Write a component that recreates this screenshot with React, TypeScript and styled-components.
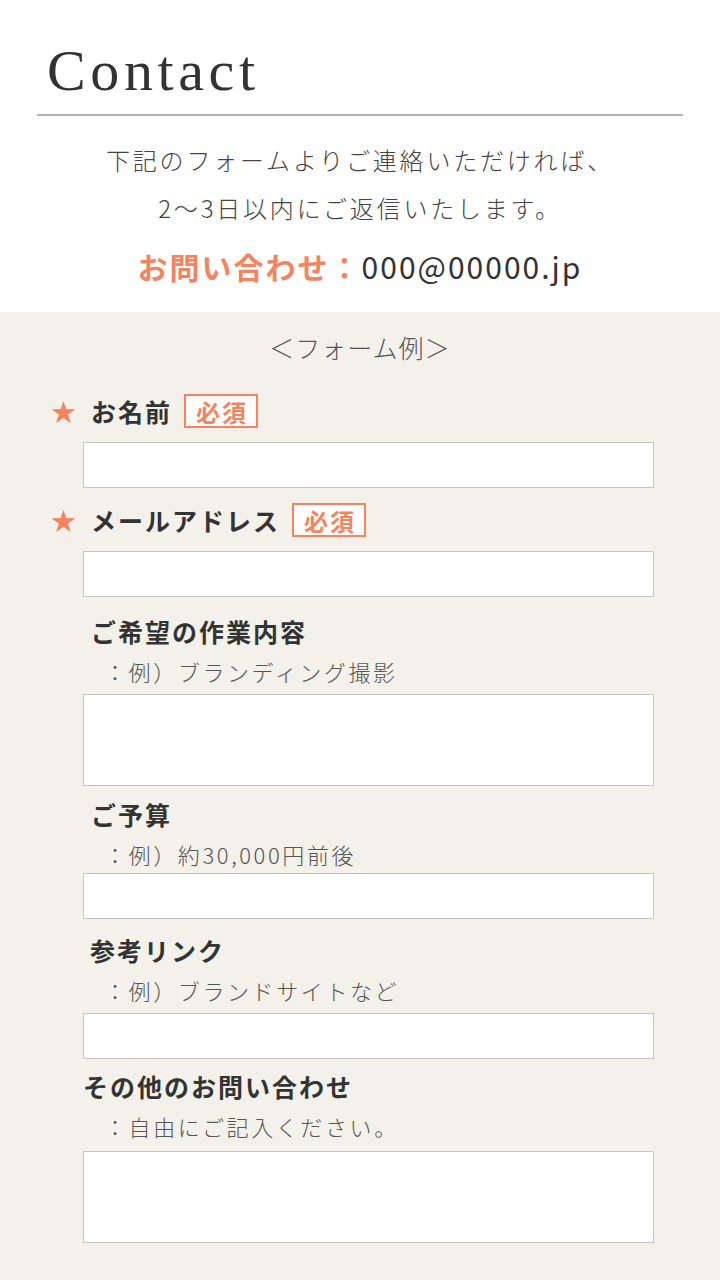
import styled, { createGlobalStyle } from 'styled-components';

const CORAL = '#f3845f';
const INK = '#333333';

const GlobalStyle = createGlobalStyle`
  html, body {
    margin: 0;
    padding: 0;
    background: #f3f1ea;
  }
  body {
    font-family: "Noto Sans CJK JP", "Noto Sans", sans-serif;
    color: ${INK};
  }
`;

interface IField {
  label: string;
  required?: boolean;
  hint?: string;
  multiline?: boolean;
  indent: number;
  gap: number; // space above the label row
  boxGap: number; // space above the input box
}

const FIELDS: IField[] = [
  { label: 'お名前', required: true, indent: 91, gap: 28, boxGap: 13 },
  { label: 'メールアドレス', required: true, indent: 91, gap: 14, boxGap: 13 },
  { label: 'ご希望の作業内容', hint: '：例）ブランディング撮影', multiline: true, indent: 91, gap: 16, boxGap: 8 },
  { label: 'ご予算', hint: '：例）約30,000円前後', indent: 91, gap: 10, boxGap: 4 },
  { label: '参考リンク', hint: '：例）ブランドサイトなど', indent: 90, gap: 13, boxGap: 8 },
  { label: 'その他のお問い合わせ', hint: '：自由にご記入ください。', multiline: true, indent: 83, gap: 9, boxGap: 10 },
];

const Page = styled.div`
  width: 720px;
  min-height: 1280px;
  background: #f3f1ea;
`;

const Header = styled.header`
  background: #ffffff;
  height: 312px;
  box-sizing: border-box;
  padding-top: 36px;
`;

const Title = styled.h1`
  margin: 0 0 0 47px;
  font-family: "Liberation Serif", "DejaVu Serif", serif;
  font-weight: normal;
  font-size: 58px;
  line-height: 70px;
  letter-spacing: 4.6px;
  color: ${INK};
`;

const Divider = styled.hr`
  margin: 8px 37px 0;
  border: none;
  height: 2px;
  background: #b3b3b3;
`;

const Lead = styled.p`
  margin: 20px 0 0;
  text-align: center;
  font-size: 24px;
  font-weight: 300;
  line-height: 48px;
  letter-spacing: 2.8px;
  color: #444;
`;

const ContactLine = styled.p`
  margin: 14px 0 0;
  text-align: center;
  font-size: 30px;
  line-height: 40px;
  letter-spacing: 2px;
  color: ${INK};
`;

const ContactLabel = styled.span`
  color: ${CORAL};
  font-weight: 700;
`;

const FormArea = styled.section`
  padding: 17px 0 40px;
`;

const FormHeading = styled.div`
  text-align: center;
  font-size: 25px;
  font-weight: 300;
  line-height: 36px;
  letter-spacing: 1px;
  color: #555;
`;

const Field = styled.div<{ $gap: number }>`
  margin-top: ${(p) => p.$gap}px;
`;

const LabelRow = styled.div<{ $indent: number }>`
  position: relative;
  display: flex;
  align-items: center;
  height: 36px;
  padding-left: ${(p) => p.$indent}px;
`;

const Star = styled.span`
  position: absolute;
  left: 51px;
  top: 50%;
  transform: translateY(-52%);
  font-size: 25px;
  line-height: 1;
  color: ${CORAL};
`;

const Label = styled.label`
  font-size: 25px;
  font-weight: 700;
  letter-spacing: 2px;
  color: ${INK};
`;

const Badge = styled.span`
  margin-left: 12px;
  display: inline-flex;
  align-items: center;
  height: 34px;
  box-sizing: border-box;
  padding: 0 8px 0 10px;
  border: 2px solid ${CORAL};
  background: #ffffff;
  color: ${CORAL};
  font-size: 24px;
  font-weight: 700;
  letter-spacing: 2px;
`;

const Hint = styled.div`
  margin-top: 7px;
  padding-left: 104px;
  font-size: 22px;
  font-weight: 300;
  line-height: 30px;
  letter-spacing: 2.6px;
  color: #555;
`;

const boxStyle = `
  display: block;
  margin-left: 83px;
  width: 571px;
  box-sizing: border-box;
  background: #ffffff;
  border: 1px solid #c9c6c2;
  border-radius: 0;
  outline: none;
  font-family: inherit;
  font-size: 20px;
  padding: 6px 10px;
  resize: none;
`;

const Input = styled.input<{ $gap: number }>`
  ${boxStyle}
  margin-top: ${(p) => p.$gap}px;
  height: 46px;
`;

const TextArea = styled.textarea<{ $gap: number }>`
  ${boxStyle}
  margin-top: ${(p) => p.$gap}px;
  height: 92px;
`;

const FormField = ({ field }: { field: IField }) => (
  <Field $gap={field.gap}>
    <LabelRow $indent={field.indent}>
      {field.required && <Star>★</Star>}
      <Label>{field.label}</Label>
      {field.required && <Badge>必須</Badge>}
    </LabelRow>
    {field.hint && <Hint>{field.hint}</Hint>}
    {field.multiline ? (
      <TextArea $gap={field.boxGap} />
    ) : (
      <Input type="text" $gap={field.boxGap} />
    )}
  </Field>
);

const App = () => {
  return (
    <Page>
      <GlobalStyle />
      <Header>
        <Title>Contact</Title>
        <Divider />
        <Lead>
          下記のフォームよりご連絡いただければ、
          <br />
          2〜3日以内にご返信いたします。
        </Lead>
        <ContactLine>
          <ContactLabel>お問い合わせ：</ContactLabel>000@00000.jp
        </ContactLine>
      </Header>

      <FormArea>
        <FormHeading>＜フォーム例＞</FormHeading>
        {FIELDS.map((field) => (
          <FormField key={field.label} field={field} />
        ))}
      </FormArea>
    </Page>
  );
};

export default App;
